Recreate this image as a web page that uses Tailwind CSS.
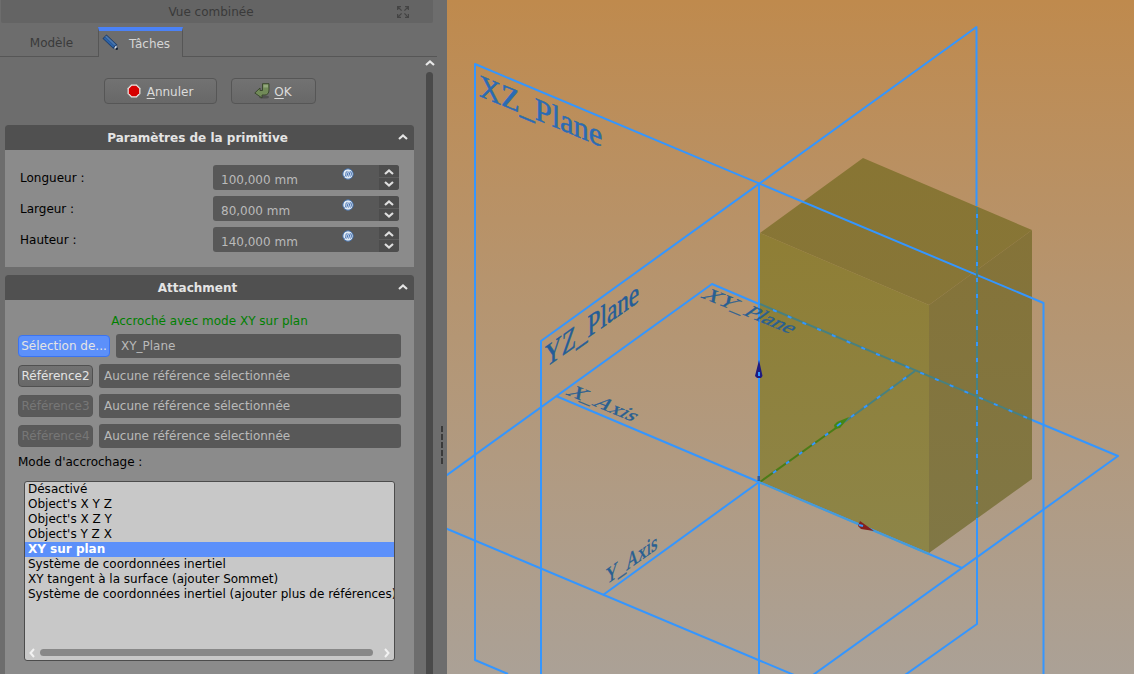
<!DOCTYPE html>
<html lang="fr">
<head>
<meta charset="utf-8">
<title>Vue combinée</title>
<script src="https://cdn.jsdelivr.net/npm/@tailwindcss/browser@4"></script>
</head>
<body class="flex h-screen overflow-hidden bg-[#6d6d6d] font-['DejaVu_Sans',sans-serif] text-[12px] leading-4 text-black">

<svg class="hidden" aria-hidden="true">
  <symbol id="up" viewBox="0 0 10 6"><path d="M1 5 5 1.500 9 5" fill="none" stroke="currentColor" stroke-width="2.200"/></symbol>
  <symbol id="down" viewBox="0 0 10 6"><path d="M1 1 5 4.500 9 1" fill="none" stroke="currentColor" stroke-width="2.200"/></symbol>
  <symbol id="fx" viewBox="0 0 12 12">
    <circle cx="6" cy="6" r="5.200" fill="#dfe9f4" stroke="#4670a8" stroke-width="1"/>
    <path d="M2.500 8.500c1.200 0 1.100-1.500 1.400-3s.4-2 1.500-2M4.600 8.500c.8-1 1-4 2.400-5M6.500 8.500c.8-1 .8-4 2.200-5M8.800 3.500c.8 1.500.8 3.500-.4 5" fill="none" stroke="#3c6bb0" stroke-width="1"/>
  </symbol>
</svg>

<aside class="flex w-[447px] shrink-0">
  <div class="flex w-[437px] flex-col">
    <header class="ml-px mr-1 flex h-[23px] shrink-0 items-center rounded-b-xs bg-[#646464] text-[#3a3a3a]">
      <h1 class="flex-1 pl-6 text-center">Vue combinée</h1>
      <button type="button" aria-label="Détacher" class="mr-6 block size-3">
        <svg viewBox="0 0 12 12" class="size-3" fill="none" stroke="#444" stroke-width="1.300"><path d="M.6 4V.6H4M.6.6 4.600 4.600M8 .6h3.400V4M11.400.6 7.400 4.600M.6 8v3.400H4M.6 11.400 4.600 7.400M8 11.400h3.400V8M11.400 11.400 7.400 7.400"/></svg>
      </button>
    </header>

    <div role="tablist" class="mt-1 flex h-[30px] shrink-0">
      <button type="button" role="tab" aria-selected="false" class="w-[98px] border-b border-[#565656] pt-[2px] pl-[5px] text-[#3a3a3a]">Modèle</button>
      <button type="button" role="tab" aria-selected="true" class="flex w-[85px] items-center border-x border-t-4 border-x-[#565656] border-t-[#4b82f6] pb-px pl-[3px] text-[#d6d6d6]">
        <svg viewBox="0 0 16 16" class="-mt-1 size-4"><path d="M.5 4.500 4.500.5 15 10.500 15.500 15.500 11 14.500Z" fill="#1b3a66"/><path d="M1.500 4.500 3 3l9.500 9-1.500 1.500Z" fill="#2b62a8"/><path d="M3 2.800 4.400 1.500 14 10.600l-1.500 1.200Z" fill="#4a78b0"/><path d="m12 14.200 2.200-3 .9 2.500-1.200 1.200Z" fill="#e8eef4"/><circle cx="14.700" cy="14.700" r="1.200" fill="#152030"/></svg>
        <span class="ml-[11px]">Tâches</span>
      </button>
      <div class="flex-1 border-b border-[#565656]"></div>
    </div>

    <div class="flex min-h-0 flex-1">
      <main class="ml-[5px] flex w-[409px] flex-col">
        <div class="flex h-[68px] shrink-0 items-start justify-center gap-[14px] pt-[21px]">
          <button type="button" class="flex h-[26px] w-[113px] items-center justify-center gap-[6px] rounded-[4px] border border-[#565656] bg-linear-to-b from-[#727272] to-[#686868] pt-px text-[#dcdcdc]">
            <svg viewBox="0 0 14 14" class="-mt-[2px] size-[14px]"><path d="M4.200.6h5.600l3.600 3.600v5.600l-3.600 3.600H4.200L.6 9.800V4.200Z" fill="#eee" stroke="#a9a9a0" stroke-width=".6"/><path d="M4.800 1.800h4.400l3 3v4.400l-3 3H4.800l-3-3V4.800Z" fill="#d60000"/></svg>
            <span><u class="underline-offset-2">A</u>nnuler</span>
          </button>
          <button type="button" class="flex h-[26px] w-[85px] items-center justify-center gap-1 rounded-[4px] border border-[#565656] bg-linear-to-b from-[#727272] to-[#686868] pt-px text-[#dcdcdc]">
            <svg viewBox="0 0 16 16" class="-mt-[2px] size-4"><ellipse cx="10" cy="14" rx="5" ry="1.500" fill="#505050"/><path d="M8.500.7H15V7c0 3-1.500 5-4 5H8v3L.8 10 6 5v2.500h2.500Z" fill="#718a58" stroke="#36432a" stroke-width=".9"/><path d="M9.500 1.700H14v2.800H9.500Z" fill="#93a87c"/></svg>
            <span><u class="underline-offset-2">O</u>K</span>
          </button>
        </div>

        <section class="shrink-0 overflow-hidden rounded-t-[3px] bg-[#8b8b8b]">
          <h2 class="flex h-[25px] items-center bg-[#505050] pr-[6px] font-bold text-[#e4e4e4]">
            <span class="flex-1 pr-2 text-center">Paramètres de la primitive</span>
            <button type="button" aria-label="Réduire" class="-mt-[2px]"><svg class="h-[6px] w-[10px]"><use href="#up"/></svg></button>
          </h2>
          <form class="flex flex-col gap-[6px] p-[15px]">
            <div class="flex h-[25px] items-center">
              <label for="lo" class="flex-1">Longueur :</label>
              <div class="flex h-full w-[186px] overflow-hidden rounded-[3px] bg-[#585858]">
                <input id="lo" value="100,000 mm" class="w-[129px] pt-1 pl-2 text-[#bababa] outline-none">
                <svg class="mt-[3px] size-3"><use href="#fx"/></svg>
                <div class="ml-auto flex w-5 flex-col divide-y divide-[#5c5c5c] bg-[#4d4d4d] text-[#dedede]">
                  <button type="button" aria-label="Augmenter" class="flex flex-1 items-center justify-center pt-px"><svg class="h-[6px] w-[10px]"><use href="#up"/></svg></button>
                  <button type="button" aria-label="Diminuer" class="flex flex-1 items-center justify-center pb-px"><svg class="h-[6px] w-[10px]"><use href="#down"/></svg></button>
                </div>
              </div>
            </div>
            <div class="flex h-[25px] items-center">
              <label for="la" class="flex-1">Largeur :</label>
              <div class="flex h-full w-[186px] overflow-hidden rounded-[3px] bg-[#585858]">
                <input id="la" value="80,000 mm" class="w-[129px] pt-1 pl-2 text-[#bababa] outline-none">
                <svg class="mt-[3px] size-3"><use href="#fx"/></svg>
                <div class="ml-auto flex w-5 flex-col divide-y divide-[#5c5c5c] bg-[#4d4d4d] text-[#dedede]">
                  <button type="button" aria-label="Augmenter" class="flex flex-1 items-center justify-center pt-px"><svg class="h-[6px] w-[10px]"><use href="#up"/></svg></button>
                  <button type="button" aria-label="Diminuer" class="flex flex-1 items-center justify-center pb-px"><svg class="h-[6px] w-[10px]"><use href="#down"/></svg></button>
                </div>
              </div>
            </div>
            <div class="flex h-[25px] items-center">
              <label for="ha" class="flex-1">Hauteur :</label>
              <div class="flex h-full w-[186px] overflow-hidden rounded-[3px] bg-[#585858]">
                <input id="ha" value="140,000 mm" class="w-[129px] pt-1 pl-2 text-[#bababa] outline-none">
                <svg class="mt-[3px] size-3"><use href="#fx"/></svg>
                <div class="ml-auto flex w-5 flex-col divide-y divide-[#5c5c5c] bg-[#4d4d4d] text-[#dedede]">
                  <button type="button" aria-label="Augmenter" class="flex flex-1 items-center justify-center pt-px"><svg class="h-[6px] w-[10px]"><use href="#up"/></svg></button>
                  <button type="button" aria-label="Diminuer" class="flex flex-1 items-center justify-center pb-px"><svg class="h-[6px] w-[10px]"><use href="#down"/></svg></button>
                </div>
              </div>
            </div>
          </form>
        </section>

        <section class="mt-2 flex-1 overflow-hidden rounded-t-[3px] bg-[#8b8b8b]">
          <h2 class="flex h-[25px] items-center bg-[#505050] pr-[6px] font-bold text-[#e4e4e4]">
            <span class="flex-1 pr-2 text-center">Attachment</span>
            <button type="button" aria-label="Réduire" class="-mt-[2px]"><svg class="h-[6px] w-[10px]"><use href="#up"/></svg></button>
          </h2>
          <div class="flex flex-col px-[13px] pt-[13px]">
            <p class="mb-[5px] text-center text-[#008000]">Accroché avec mode XY sur plan</p>
            <div class="flex flex-col gap-[6px]">
              <div class="flex items-center gap-[6px]">
                <button type="button" class="h-[22px] w-[92px] shrink-0 rounded-[4px] border border-[#3b74f0] bg-[#5c90fa] text-[#e4e4e4]">Sélection de...</button>
                <input aria-label="Référence 1" value="XY_Plane" class="h-6 min-w-0 flex-1 rounded-[3px] bg-[#585858] px-[5px] text-[#bababa]">
              </div>
              <div class="flex items-center gap-[6px]">
                <button type="button" class="h-[22px] w-[75px] shrink-0 rounded-[4px] border border-[#505050] bg-linear-to-b from-[#727272] to-[#686868] text-[#e4e4e4]">Référence2</button>
                <input aria-label="Référence 2" value="Aucune référence sélectionnée" class="h-6 min-w-0 flex-1 rounded-[3px] bg-[#585858] px-[5px] text-[#bababa]">
              </div>
              <div class="flex items-center gap-[6px]">
                <button type="button" disabled class="h-[22px] w-[75px] shrink-0 rounded-[4px] border border-[#585858] bg-[#5a5a5a] text-[#777]">Référence3</button>
                <input aria-label="Référence 3" value="Aucune référence sélectionnée" class="h-6 min-w-0 flex-1 rounded-[3px] bg-[#585858] px-[5px] text-[#bababa]">
              </div>
              <div class="flex items-center gap-[6px]">
                <button type="button" disabled class="h-[22px] w-[75px] shrink-0 rounded-[4px] border border-[#585858] bg-[#5a5a5a] text-[#777]">Référence4</button>
                <input aria-label="Référence 4" value="Aucune référence sélectionnée" class="h-6 min-w-0 flex-1 rounded-[3px] bg-[#585858] px-[5px] text-[#bababa]">
              </div>
            </div>
            <label for="mode" class="mt-[6px]">Mode d'accrochage :</label>
            <div class="mx-[6px] mt-[11px] flex h-[180px] flex-col overflow-hidden rounded-[3px] border border-[#4c4c4c] bg-[#c8c8c8]">
              <select id="mode" size="8" class="min-h-0 w-full flex-1 overflow-hidden border-0 bg-transparent leading-4 outline-none">
                <option class="h-[15px] p-0 pl-[3px]">Désactivé</option>
                <option class="h-[15px] p-0 pl-[3px]">Object's X Y Z</option>
                <option class="h-[15px] p-0 pl-[3px]">Object's X Z Y</option>
                <option class="h-[15px] p-0 pl-[3px]">Object's Y Z X</option>
                <option selected class="h-[15px] bg-linear-to-b from-[#5c90fa] to-[#5c90fa] p-0 pl-[3px] font-bold [-webkit-text-fill-color:white]">XY sur plan</option>
                <option class="h-[15px] p-0 pl-[3px]">Système de coordonnées inertiel</option>
                <option class="h-[15px] p-0 pl-[3px]">XY tangent à la surface (ajouter Sommet)</option>
                <option class="h-[15px] p-0 pl-[3px]">Système de coordonnées inertiel (ajouter plus de références)</option>
              </select>
              <div class="flex h-[15px] shrink-0 items-center px-1 text-[#f2f2f2]">
                <button type="button" aria-label="Défiler à gauche"><svg viewBox="0 0 6 10" class="h-[10px] w-[6px]"><path d="M5 1 1.500 5 5 9" fill="none" stroke="currentColor" stroke-width="2"/></svg></button>
                <div class="mr-[11px] ml-[5px] h-[7px] flex-1 rounded-full bg-[#888]"></div>
                <button type="button" aria-label="Défiler à droite"><svg viewBox="0 0 6 10" class="h-[10px] w-[6px]"><path d="M1 1 4.500 5 1 9" fill="none" stroke="currentColor" stroke-width="2"/></svg></button>
              </div>
            </div>
          </div>
        </section>
      </main>
      <div class="ml-[11px] flex w-[9px] flex-col items-center">
        <button type="button" aria-label="Défiler vers le haut" class="mt-[3px] text-[#e8e8e8]"><svg class="h-[6px] w-[10px]"><use href="#up"/></svg></button>
        <div class="mt-[6px] w-[7px] flex-1 rounded-t-full bg-[#4a4a4a]"></div>
      </div>
    </div>
  </div>
  <div class="flex flex-1 flex-col gap-[2px] pt-[426px] pl-1">
    <i class="h-[6px] w-[2px] bg-[#3a3a3a]"></i><i class="h-[6px] w-[2px] bg-[#3a3a3a]"></i><i class="h-[6px] w-[2px] bg-[#3a3a3a]"></i><i class="h-[6px] w-[2px] bg-[#3a3a3a]"></i><i class="h-[6px] w-[2px] bg-[#3a3a3a]"></i>
  </div>
</aside>

<section aria-label="Vue 3D" class="min-w-0 flex-1 bg-linear-to-b from-[#bf8a4d] via-[#b49674] to-[#aba196]">
  <svg viewBox="447 0 687 674" preserveAspectRatio="xMinYMin slice" class="block h-full w-full">
    <defs>
      <linearGradient id="front" x1="0" y1="0" x2="0" y2="1"><stop offset="0" stop-color="#8f7e35"/><stop offset="1" stop-color="#8d8548"/></linearGradient>
      <linearGradient id="side" x1="0" y1="0" x2="0" y2="1"><stop offset="0" stop-color="#857338"/><stop offset="1" stop-color="#807745"/></linearGradient>
      <linearGradient id="top" x1="0" y1="0" x2="0" y2="1"><stop offset="0" stop-color="#887533"/><stop offset="1" stop-color="#877638"/></linearGradient>
    </defs>
    <!-- solid -->
    <path d="M760 233 863 158 1032 230 929 305Z" fill="url(#top)"/>
    <path d="M760 233 929 305V553L760 482Z" fill="url(#front)"/>
    <path d="M929 305 1032 230V479L929 553Z" fill="url(#side)"/>
    <!-- plane outlines and axes -->
    <g fill="none" stroke="#3496ff" stroke-width="2" stroke-linejoin="round">
      <path d="M508 674 475 660V64L1043.500 303V680"/>
      <path d="M541 680V341L976.500 27V206M977 504V624L905 675"/>
      <path d="M440 480 712 284 759 304M1032 420 1118 456 806 680 440 526"/>
      <path d="M556 396 759 482 962 568M603 595 759 482M759 184V680"/>
    </g>
    <!-- parts seen through the solid -->
    <g fill="none" stroke="#48807f" stroke-width="2">
      <path d="M977 207V518M760 304 1032 420M843 423 915 371"/>
      <path d="M760 482 843 423" stroke="#4b7c17"/>
    </g>
    <g fill="none" stroke="#3496ff" stroke-width="2" stroke-dasharray="4 12">
      <path d="M977 214V504M773 310 1032 420M773 473 915 371"/>
    </g>
    <path d="M977 518V530" stroke="#3496ff" stroke-width="2"/>
    <path d="M759 482 929 554" stroke="#479bd8" stroke-width="2"/>
    <!-- axis arrows -->
    <path d="M759 360 762.500 376 761 378H757L755 376Z" fill="#1f1b80"/><path d="M758 372h2v4h-2Z" fill="#3496ff"/>
    <path d="M757.500 476h2.500v5h-2.500Z" fill="#2d5a9c"/>
    <path d="M849 417 840 428 835 429 834 425 837 422Z" fill="#438617"/><path d="m837 426 4-3" stroke="#3496ff" stroke-width="2"/>
    <path d="M874 531 860 521 858 526 861 529Z" fill="#85201d"/><path d="m859 525 4 1" stroke="#3496ff" stroke-width="2"/>
    <!-- labels lying in the planes of the projection -->
    <g font-family="'Liberation Serif', serif" font-size="18" stroke-width=".3">
      <text transform="matrix(1.69 .7 0 1.78 479 96)" fill="#2a6bb4" stroke="#2a6bb4">XZ_Plane</text>
      <text transform="matrix(1.29 -.91 0 1.78 545 368)" fill="#235d98" stroke="#235d98">YZ_Plane</text>
      <text transform="matrix(1.19 .49 -.968 .698 700 297)" fill="#285f92" stroke="#285f92">XY_Plane</text>
      <text transform="matrix(1.19 .49 -.968 .698 565 394)" fill="#285f92" stroke="#285f92">X_Axis</text>
      <text transform="matrix(.92 -.65 0 1.3 606 585)" fill="#285f92" stroke="#285f92">Y_Axis</text>
    </g>
  </svg>
</section>
</body>
</html>
